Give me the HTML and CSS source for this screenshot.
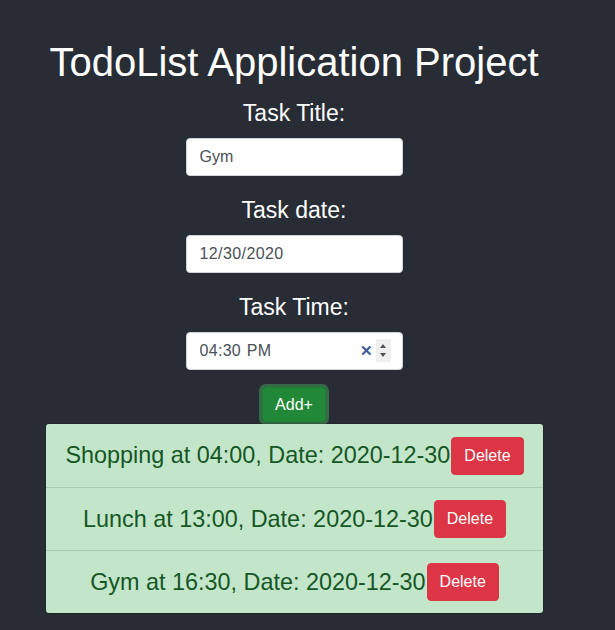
FILE: index.html
```html
<!DOCTYPE html>
<html>
<head>
<meta charset="utf-8">
<link rel="stylesheet" href="styles.css">
</head>
<body>
<div class="app">
  <h1 class="title">TodoList Application Project</h1>
  <form class="form">
    <label class="label">Task Title:</label>
    <input class="field" type="text" value="Gym">
    <label class="label">Task date:</label>
    <input class="field field-date" type="text" value="12/30/2020">
    <label class="label">Task Time:</label>
    <div class="time-wrap">
      <input class="field field-time" type="text" value="04:30 PM">
      <span class="time-ctrl">
        <span class="clear">&#x2715;</span>
        <span class="spin"><span class="up"></span><span class="down"></span></span>
      </span>
    </div>
    <button class="add" type="button">Add+</button>
  </form>
  <ul class="list">
    <li class="item"><span>Shopping at 04:00, Date: 2020-12-30</span><button class="del" type="button">Delete</button></li>
    <li class="item"><span>Lunch at 13:00, Date: 2020-12-30</span><button class="del" type="button">Delete</button></li>
    <li class="item"><span>Gym at 16:30, Date: 2020-12-30</span><button class="del" type="button">Delete</button></li>
  </ul>
</div>
</body>
</html>
```
FILE: styles.css
```css
html, body {
  margin: 0;
  padding: 0;
  background: #282c34;
  font-family: "Liberation Sans", Arial, sans-serif;
}
.app {
  width: 588px;
  display: flex;
  flex-direction: column;
  align-items: center;
  color: #fff;
}
.title {
  font-family: "Liberation Sans", Arial, sans-serif;
  font-weight: 400;
  font-size: 40px;
  line-height: 48px;
  margin: 38px 0 13px 0;
}
.form {
  display: flex;
  flex-direction: column;
  align-items: center;
}
.label {
  font-family: "Liberation Sans", Arial, sans-serif;
  font-size: 23px;
  line-height: 28px;
  margin: 0 0 11px 0;
  color: #fff;
}
.field {
  box-sizing: border-box;
  width: 217px;
  height: 38px;
  padding: 6px 13px;
  font-family: "Liberation Sans", Arial, sans-serif;
  font-size: 16px;
  color: #495057;
  background: #fff;
  border: 1px solid #ced4da;
  border-radius: 4px;
  margin-bottom: 20px;
  outline: none;
}
.field-date {
  letter-spacing: 0.4px;
}
.field-time {
  word-spacing: 1px;
  letter-spacing: 0.3px;
}
.time-wrap {
  position: relative;
}
.time-ctrl {
  position: absolute;
  right: 12px;
  top: 7px;
  display: flex;
  align-items: center;
  gap: 3px;
}
.clear {
  color: #3c5a99;
  font-weight: 700;
  font-size: 15px;
  line-height: 23px;
}
.spin {
  width: 15px;
  height: 23px;
  background: #efefef;
  display: flex;
  flex-direction: column;
  align-items: center;
  justify-content: center;
  gap: 5px;
}
.up {
  width: 0; height: 0;
  border-left: 3.5px solid transparent;
  border-right: 3.5px solid transparent;
  border-bottom: 4px solid #505050;
}
.down {
  width: 0; height: 0;
  border-left: 3.5px solid transparent;
  border-right: 3.5px solid transparent;
  border-top: 4px solid #505050;
}
.add {
  margin: -3px 0 1px 0;
  font-family: "Liberation Sans", Arial, sans-serif;
  font-size: 16px;
  color: #fff;
  background: #218838;
  border: 1px solid #1e7e34;
  border-radius: 4px;
  padding: 5px 12px;
  line-height: 23px;
  box-shadow: 0 0 0 3px rgba(72, 180, 97, 0.45);
}
.list {
  list-style: none;
  margin: 0 0 0 45px;
  padding: 0;
  align-self: flex-start;
  width: 499px;
  border-radius: 4px;
  overflow: hidden;
  border: 1px solid rgba(0,0,0,0.125);
  box-sizing: border-box;
}
.item {
  display: flex;
  justify-content: center;
  align-items: center;
  height: 63px;
  box-sizing: border-box;
  background: #c3e6cb;
  color: #155724;
  font-size: 23.4px;
  border-top: 1px solid rgba(0,0,0,0.125);
}
.item:first-child {
  border-top: none;
}
.del {
  font-family: "Liberation Sans", Arial, sans-serif;
  font-size: 16px;
  color: #fff;
  background: #dc3545;
  border: 1px solid #dc3545;
  border-radius: 4px;
  padding: 6px 12px;
  line-height: 24px;
  margin-left: 1px;
}
```
